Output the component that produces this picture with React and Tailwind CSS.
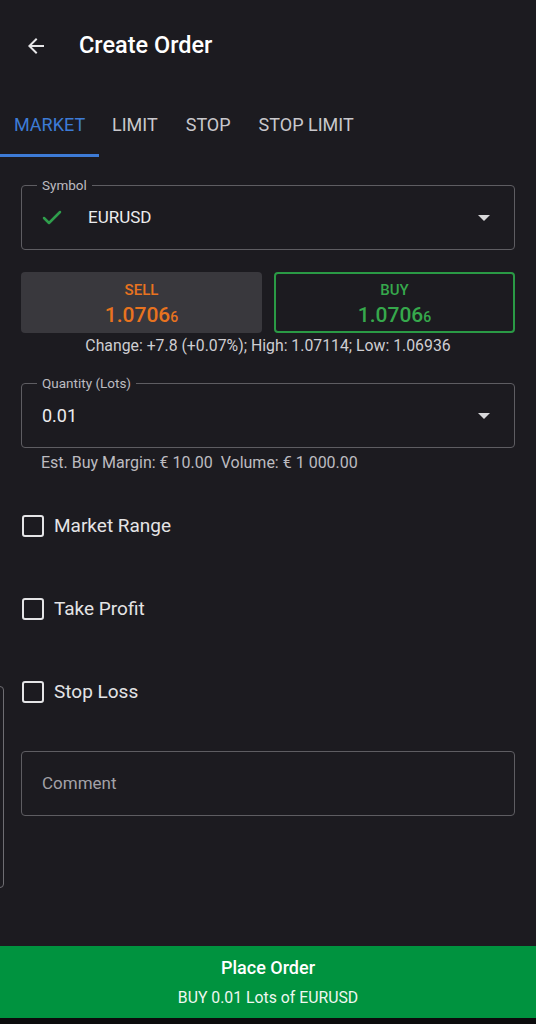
import { Check } from 'lucide-react';

const tabs = ['MARKET', 'LIMIT', 'STOP', 'STOP LIMIT'];

function Caret() {
    return (
        <svg width="12" height="6" viewBox="0 0 12 6" className="mr-[24px]">
            <path d="M0 0h12L6 6z" fill="#d8d8da" />
        </svg>
    );
}

function Field({ label, children }) {
    return (
        <div className="relative mx-[21px] h-[65px] rounded-[4px] border border-[#5e5d62] flex items-center">
            {label &&
                <span className="absolute -top-[9px] left-[15px] px-[5px] bg-[#1c1b20] text-[13.5px] leading-[16px] text-[#bdbcc0]">
                    {label}
                </span>
            }
            {children}
        </div>
    );
}

function Price({ color }) {
    return (
        <p className={"mt-[3px] text-[21px] leading-[26px] font-medium " + color}>
            1.0706<span className="text-[14px]">6</span>
        </p>
    );
}

function CheckRow({ label, className }) {
    return (
        <div className={"h-[48px] flex items-center gap-[10px] pl-[22px] " + className}>
            <div className="w-[22px] h-[22px] rounded-[3px] border-2 border-[#e4e4e6]"></div>
            <span className="text-[19px] text-[#e4e4e6]">{label}</span>
        </div>
    );
}

export default function App() {
    return (
        <main className="relative w-[536px] h-[1024px] flex flex-col bg-[#1c1b20] overflow-hidden" style={{ fontFamily: 'Roboto, "Noto Sans", sans-serif' }}>
            {/* header */}
            <header className="h-[92px] flex items-center pl-[24px]">
                <svg width="24" height="24" viewBox="0 0 24 24">
                    <path d="M20 11H7.83l5.59-5.59L12 4l-8 8 8 8 1.41-1.41L7.83 13H20v-2z" fill="#e6e6e8" />
                </svg>
                <h1 className="ml-[31px] text-[23.5px] font-medium text-white">Create Order</h1>
            </header>

            {/* tabs */}
            <nav className="h-[65px] flex">
                {tabs.map((tab, index) => (
                    <div key={tab}
                        className={"relative h-full flex items-center text-[18px] " + (index === 0 ? "w-[99px] pl-[14px] pr-[13px] text-[#3d7bd6]" : "pl-[13px] pr-[15px] text-[#c9c8cc]")}
                    >
                        {tab}
                        {index === 0 &&
                            <div className="absolute left-0 bottom-0 w-full h-[3px] bg-[#3d7bd6]"></div>
                        }
                    </div>
                ))}
            </nav>

            {/* symbol */}
            <div className="mt-[28px]">
                <Field label="Symbol">
                    <Check size={24} strokeWidth={2.5} color="#2f9e4c" className="ml-[18px]" />
                    <span className="ml-[24px] flex-1 text-[17px] text-[#ececee]">EURUSD</span>
                    <Caret />
                </Field>
            </div>

            {/* sell / buy */}
            <div className="mt-[22px] mx-[21px] grid grid-cols-2 gap-[12px]">
                <div className="h-[61px] pt-[6px] rounded-[4px] bg-[#39383d] flex flex-col items-center justify-center">
                    <p className="text-[15px] leading-[18px] font-medium text-[#e8731f]">SELL</p>
                    <Price color="text-[#e8731f]" />
                </div>
                <div className="h-[61px] pt-[6px] rounded-[4px] border-2 border-[#2a9a45] flex flex-col items-center justify-center">
                    <p className="text-[15px] leading-[18px] font-medium text-[#36a84c]">BUY</p>
                    <Price color="text-[#36a84c]" />
                </div>
            </div>
            <p className="mt-[2px] text-center text-[15.8px] leading-[22px] text-[#cfced2]">
                Change: +7.8 (+0.07%); High: 1.07114; Low: 1.06936
            </p>

            {/* quantity */}
            <div className="mt-[26px]">
                <Field label="Quantity (Lots)">
                    <span className="ml-[20px] flex-1 text-[18px] text-[#ececee]">0.01</span>
                    <Caret />
                </Field>
            </div>
            <p className="mt-[4px] pl-[41px] text-[16px] leading-[22px] text-[#bdbcc0]">
                Est. Buy Margin: € 10.00&nbsp;&nbsp;Volume: € 1 000.00
            </p>

            {/* options */}
            <CheckRow label="Market Range" className="mt-[28px]" />
            <CheckRow label="Take Profit" className="mt-[35px]" />
            <CheckRow label="Stop Loss" className="mt-[35px]" />

            {/* comment */}
            <div className="mt-[35px]">
                <Field>
                    <span className="ml-[20px] text-[17px] text-[#a3a2a7]">Comment</span>
                </Field>
            </div>

            {/* stray panel edge on the left */}
            <div className="absolute -left-[12px] top-[686px] w-[16px] h-[202px] rounded-[4px] border border-[#6e6d72]"></div>

            {/* place order */}
            <footer className="mt-auto">
                <div className="h-[72px] bg-[#00933f] flex flex-col items-center justify-center">
                    <p className="text-[18px] leading-[22px] font-medium text-white">Place Order</p>
                    <p className="mt-[10px] text-[15.8px] leading-[18px] text-[#eef7f0]">BUY 0.01 Lots of EURUSD</p>
                </div>
                <div className="h-[6px] bg-[#0b0b0c]"></div>
            </footer>
        </main>
    );
}
